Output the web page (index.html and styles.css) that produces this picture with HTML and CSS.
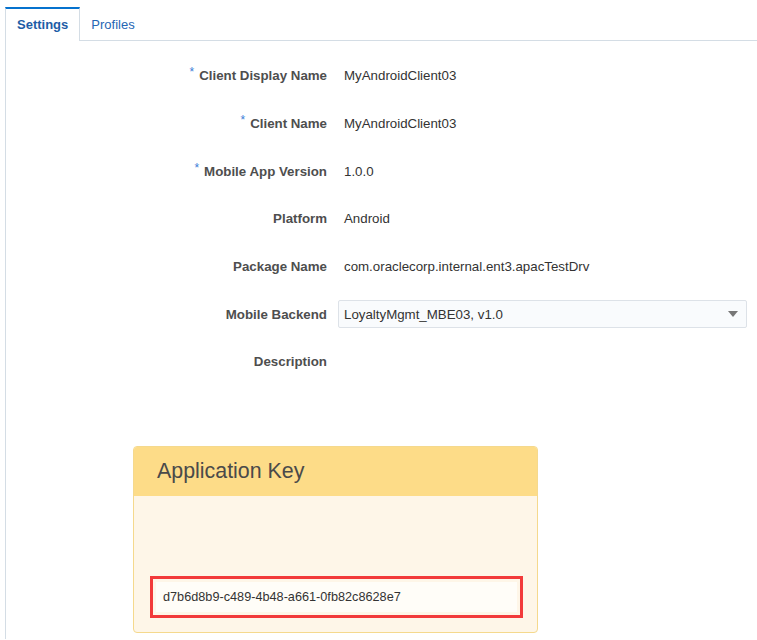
FILE: index.html
```html
<!DOCTYPE html>
<html>
<head>
<meta charset="utf-8">
<link rel="stylesheet" href="styles.css">
</head>
<body>
<div class="tabs">
  <div class="tab active">Settings</div>
  <div class="tab">Profiles</div>
</div>
<div class="content">
  <div class="form">
    <div class="row"><div class="label"><span class="req">*</span>Client Display Name</div><div class="value">MyAndroidClient03</div></div>
    <div class="row"><div class="label"><span class="req">*</span>Client Name</div><div class="value">MyAndroidClient03</div></div>
    <div class="row"><div class="label"><span class="req">*</span>Mobile App Version</div><div class="value">1.0.0</div></div>
    <div class="row"><div class="label">Platform</div><div class="value">Android</div></div>
    <div class="row"><div class="label">Package Name</div><div class="value">com.oraclecorp.internal.ent3.apacTestDrv</div></div>
    <div class="row"><div class="label">Mobile Backend</div>
      <div class="select"><span>LoyaltyMgmt_MBE03, v1.0</span><span class="arrow"></span></div>
    </div>
    <div class="row"><div class="label">Description</div><div class="value"></div></div>
  </div>
  <div class="panel">
    <div class="panel-head">Application Key</div>
    <div class="panel-body">
      <div class="highlight">
        <div class="key">d7b6d8b9-c489-4b48-a661-0fb82c8628e7</div>
      </div>
    </div>
  </div>
</div>
</body>
</html>
```

FILE: styles.css
```css
html, body {
  margin: 0;
  padding: 0;
  background: #fff;
  font-family: "Liberation Sans", Arial, sans-serif;
  font-size: 13px;
}
.tabs {
  display: flex;
  padding-top: 7px;
  padding-left: 5px;
  height: 33px;
  box-sizing: content-box;
}
.tab {
  height: 33px;
  box-sizing: border-box;
  padding: 0 11px;
  display: flex;
  align-items: center;
  color: #2566b4;
}
.tab.active {
  border-top: 2px solid #0572ce;
  border-left: 1px solid #d4dde5;
  border-right: 1px solid #d4dde5;
  background: #fff;
  font-weight: bold;
  color: #1d5da6;
  margin-bottom: -1px;
  height: 34px;
  padding-bottom: 1px;
  position: relative;
}
.tab + .tab {
  padding-left: 11px;
  padding-top: 1px;
}
.content {
  margin-left: 5px;
  border-left: 1px solid #d4dde5;
  border-top: 1px solid #d4dde5;
  min-height: 598px;
}
.form {
  padding-top: 11px;
}
.row {
  height: 47.7px;
  display: grid;
  grid-template-columns: 321px 409px;
  column-gap: 11px;
  align-items: center;
}
.label {
  text-align: right;
  font-weight: bold;
  font-size: 13.3px;
  color: #4e4e4e;
}
.req {
  color: #3b7dd8;
  font-weight: normal;
  font-size: 12px;
  position: relative;
  top: -4px;
  margin-right: 5px;
}
.value {
  color: #333;
  padding-left: 6px;
  font-size: 13.3px;
}
.select {
  height: 28px;
  box-sizing: border-box;
  border: 1px solid #dde2e8;
  border-radius: 2px;
  background: #f9fbfd;
  display: flex;
  align-items: center;
  justify-content: space-between;
  padding: 0 8px 0 5px;
  color: #333;
  font-size: 13.3px;
}
.arrow {
  width: 0;
  height: 0;
  border-left: 5px solid transparent;
  border-right: 5px solid transparent;
  border-top: 6px solid #777;
}
.panel {
  margin-top: 60px;
  margin-left: 127px;
  width: 405px;
  height: 187px;
  box-sizing: border-box;
  border: 1px solid #f5d98d;
  border-radius: 4px;
  background: #fef6e8;
  overflow: hidden;
  display: flex;
  flex-direction: column;
}
.panel-head {
  height: 49px;
  background: #fddc88;
  font-size: 21.4px;
  color: #4a4a4a;
  padding-left: 23px;
  display: flex;
  align-items: center;
  box-sizing: border-box;
  padding-top: 1px;
}
.panel-body {
  flex: 1;
  display: flex;
  flex-direction: column;
  justify-content: flex-end;
  padding: 0 14px 14px 16px;
}
.highlight {
  border: 3px solid #f23a3a;
  padding: 3px;
}
.key {
  height: 30px;
  background: #fffdf8;
  display: flex;
  align-items: center;
  padding-left: 7px;
  color: #333;
  font-size: 12.7px;
}
```
